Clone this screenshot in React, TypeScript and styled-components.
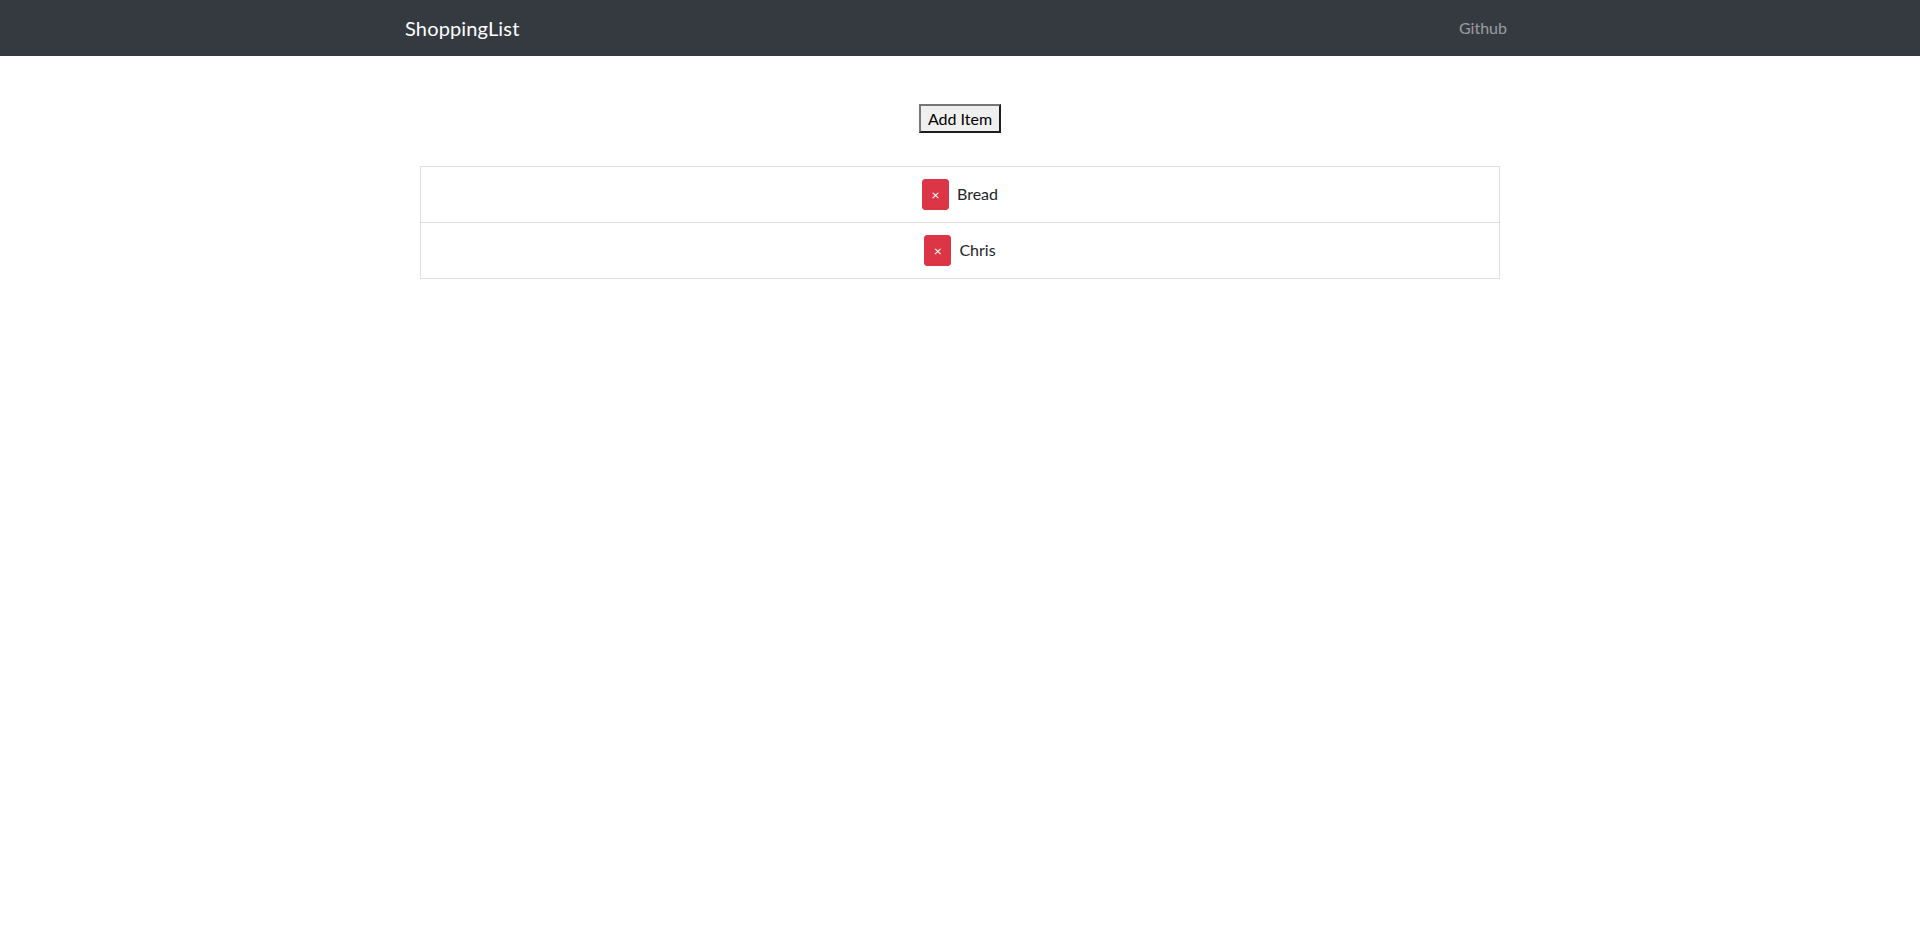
import React, { useState } from 'react';
import styled, { createGlobalStyle } from 'styled-components';

const GlobalStyle = createGlobalStyle`
  * {
    box-sizing: border-box;
  }

  body {
    margin: 0;
    font-family: "Segoe UI", Lato, "Liberation Sans", sans-serif;
    font-size: 16px;
    line-height: 1.5;
    color: #212529;
    background-color: #fff;
  }
`

const Navbar = styled.nav`
  background-color: #343a40;
  padding: 8px 16px;
  height: 56px;
`

const Container = styled.div`
  width: 100%;
  max-width: 1140px;
  margin: 0 auto;
  padding: 0 15px;
`

const NavInner = styled(Container)`
  display: flex;
  align-items: center;
  justify-content: space-between;
  height: 100%;
`

const Brand = styled.a`
  font-size: 20px;
  line-height: 30px;
  padding: 5px 0;
  color: #fff;
  letter-spacing: 0.15px;
  text-decoration: none;
`

const NavLink = styled.a`
  padding: 8px;
  color: rgba(255, 255, 255, 0.5);
  text-decoration: none;
`

const Main = styled(Container)`
  padding-top: 48px;
`

const Actions = styled.div`
  display: flex;
  justify-content: center;
  margin-bottom: 33px;
`

const AddButton = styled.button`
  font-family: inherit;
  font-size: 16px;
  line-height: 23px;
  padding: 1px 7px;
  background-color: #efefef;
  color: #000;
  border-style: solid;
  border-width: 2px;
  border-color: #767676 #1e1e1e #1e1e1e #767676;
  border-radius: 0;
  cursor: pointer;
`

const ListGroup = styled.ul`
  list-style: none;
  margin: 0;
  padding: 0;
`

const ListItem = styled.li`
  display: flex;
  align-items: center;
  justify-content: center;
  gap: 8px;
  padding: 12px 20px;
  border: 1px solid #dfdfdf;

  & + & {
    border-top: none;
  }
`

const RemoveButton = styled.button`
  width: 27px;
  height: 31px;
  padding: 0;
  border: 1px solid #dc3545;
  border-radius: 3px;
  background-color: #dc3545;
  color: #fff;
  font-family: inherit;
  font-size: 14px;
  line-height: 1;
  cursor: pointer;
`

const ItemName = styled.span`
  margin-bottom: 2px;
  color: #212529;
`

export default function App() {
    const [items, setItems] = useState([
        {id: 1, name: 'Bread'},
        {id: 2, name: 'Chris'},
    ]);

    return (
        <>
            <GlobalStyle/>
            <Navbar>
                <NavInner>
                    <Brand href="#">ShoppingList</Brand>
                    <NavLink href="#">Github</NavLink>
                </NavInner>
            </Navbar>
            <Main>
                <Container>
                    <Actions>
                        <AddButton>Add Item</AddButton>
                    </Actions>
                    <ListGroup>
                        {items.map((item) => (
                            <ListItem key={item.id}>
                                <RemoveButton onClick={() => setItems(items.filter((i) => i.id !== item.id))}>
                                    &times;
                                </RemoveButton>
                                <ItemName>{item.name}</ItemName>
                            </ListItem>
                        ))}
                    </ListGroup>
                </Container>
            </Main>
        </>
    );
}
